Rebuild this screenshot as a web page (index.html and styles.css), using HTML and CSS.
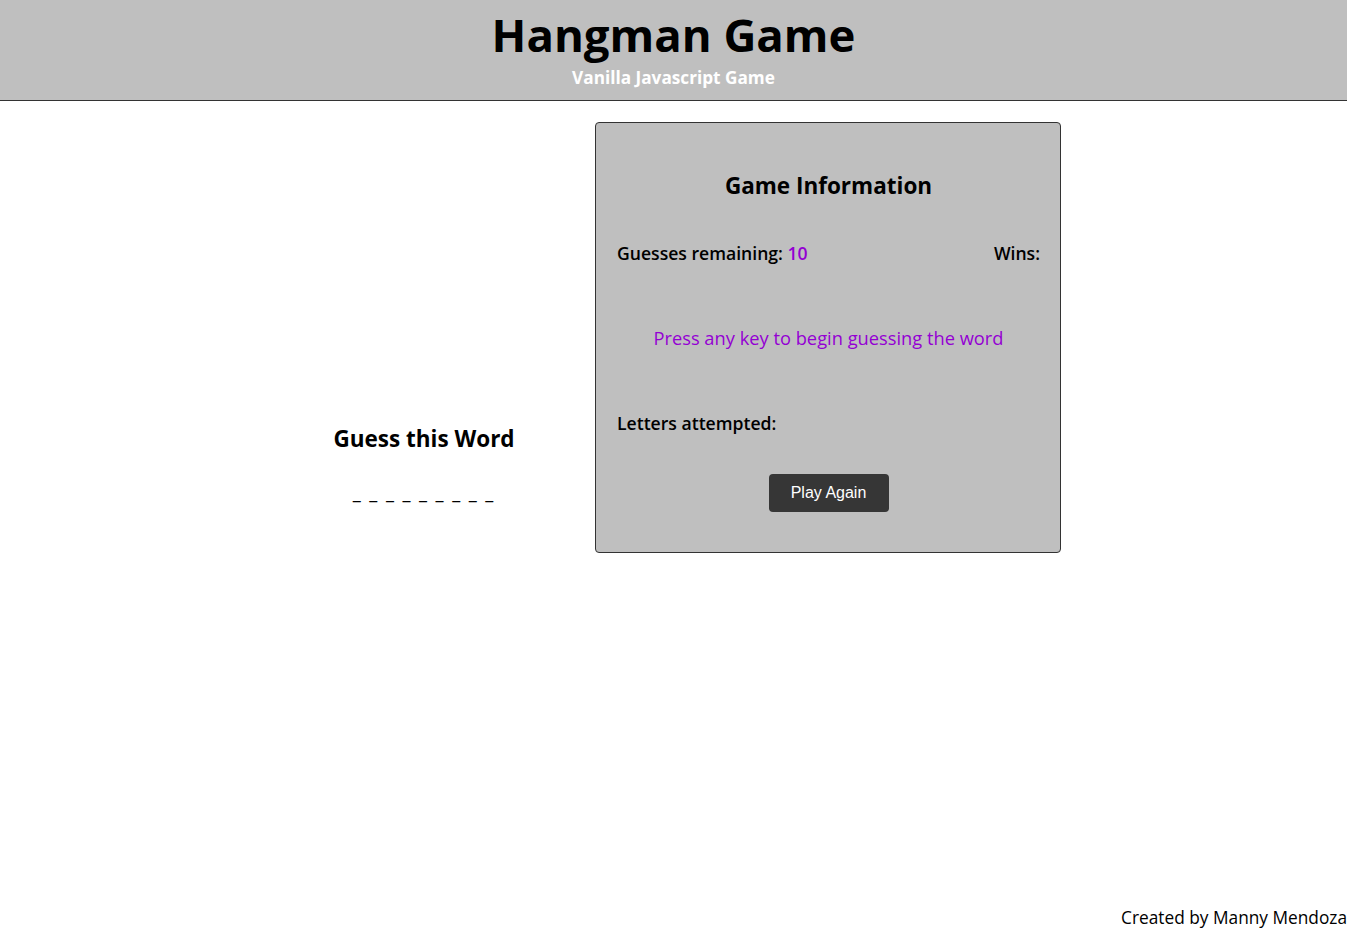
FILE: index.html
```html
<!DOCTYPE html>
<html lang="en">
<head>
<meta charset="utf-8">
<title>Hangman Game</title>
<link rel="stylesheet" href="styles.css">
</head>
<body>
<header class="header">
  <h1 class="title">Hangman Game</h1>
  <p class="subtitle">Vanilla Javascript Game</p>
</header>
<main class="main">
  <section class="word-col">
    <h2 class="word-title">Guess this Word</h2>
    <p class="blanks">_ _ _ _ _ _ _ _ _</p>
  </section>
  <section class="card">
    <h2 class="card-title">Game Information</h2>
    <div class="stats">
      <span class="label">Guesses remaining: <span class="count">10</span></span>
      <span class="label">Wins:</span>
    </div>
    <p class="prompt">Press any key to begin guessing the word</p>
    <p class="label letters">Letters attempted:</p>
    <div class="actions"><button class="btn">Play Again</button></div>
  </section>
</main>
<footer class="footer">Created by Manny Mendoza</footer>
</body>
</html>
```

FILE: styles.css
```css
* { box-sizing: border-box; }
html, body { margin: 0; padding: 0; }
body {
  font-family: "Open Sans", "Noto Sans", sans-serif;
  color: #000;
  background: #fff;
  min-height: 100vh;
  display: flex;
  flex-direction: column;
}
.header {
  background: #bfbfbf;
  height: 101px;
  border-bottom: 1px solid #333;
  text-align: center;
  padding-top: 6px;
}
.title {
  margin: 0;
  font-size: 45.5px;
  line-height: 56px;
  font-weight: 700;
}
.subtitle {
  margin: 4px 0 0;
  color: #fff;
  font-weight: 700;
  font-size: 17.2px;
  line-height: 24px;
}
.main {
  display: grid;
  grid-template-columns: 342px 466px;
  padding-left: 253px;
  padding-top: 21px;
}
.word-col {
  text-align: center;
  padding-top: 298px;
}
.word-title {
  margin: 0;
  font-size: 22.5px;
  line-height: 38px;
  font-weight: 700;
}
.blanks {
  margin: 0;
  margin-top: 22px;
  font-size: 18.3px;
  letter-spacing: 1.9px;
  line-height: 24px;
}
.card {
  background: #bfbfbf;
  border: 1px solid #333;
  border-radius: 4px;
  height: 431px;
  padding: 0 20px 39px 21px;
  display: flex;
  flex-direction: column;
}
.card-title {
  margin: 48px 0 0;
  text-align: center;
  font-size: 22.5px;
  line-height: 30px;
  font-weight: 700;
}
.stats {
  margin-top: 40px;
  display: flex;
  justify-content: space-between;
  line-height: 24px;
}
.label {
  font-size: 17.6px;
  font-weight: 600;
  line-height: 24px;
}
.count { color: #9400d3; }
.prompt {
  margin: 61px 0 0;
  text-align: center;
  color: #9400d3;
  font-size: 18.3px;
  line-height: 24px;
}
.letters { margin: 61px 0 0; }
.actions {
  margin-top: 39px;
  display: flex;
  justify-content: center;
}
.btn {
  font-family: "Liberation Sans", Arial, sans-serif;
  font-size: 16px;
  color: #fff;
  background: #363636;
  border: none;
  border-radius: 4px;
  height: 38px;
  width: 120px;
  padding: 0;
}
.footer {
  margin-top: auto;
  text-align: right;
  font-size: 17.3px;
  line-height: 24px;
  margin-bottom: -2px;
}
```
